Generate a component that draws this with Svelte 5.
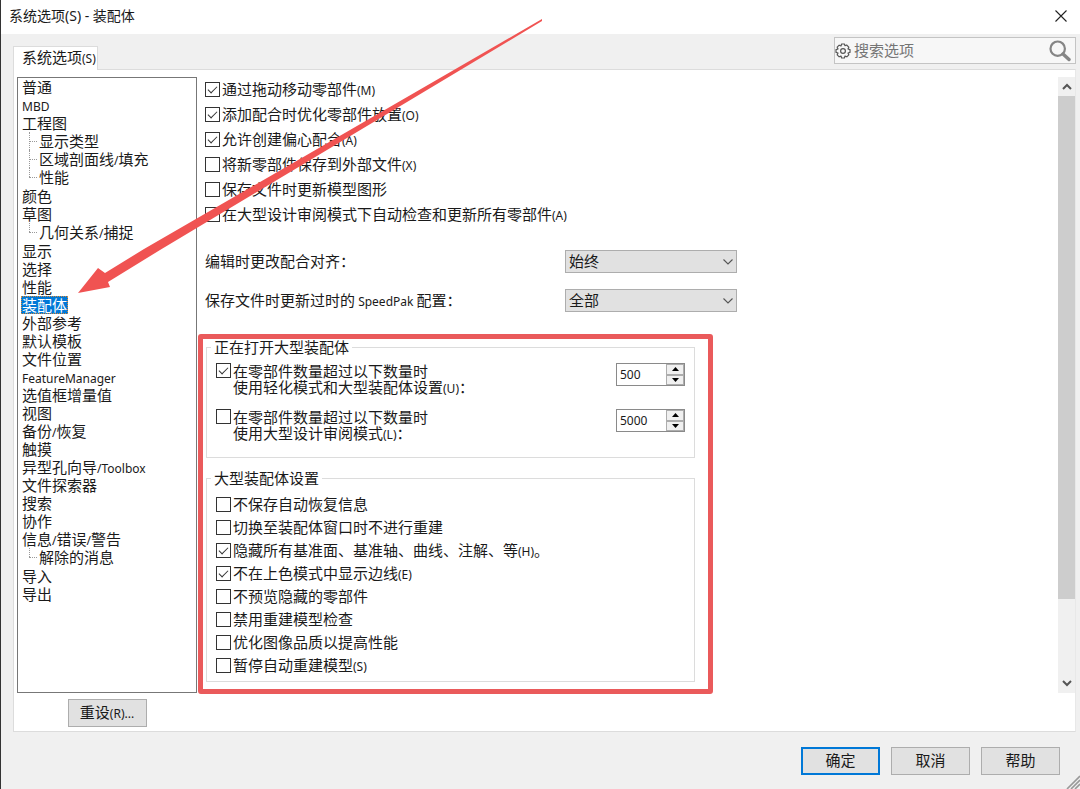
<script lang="ts">
  interface TreeItem {
    id: string;
    label: string;
    children?: TreeItem[];
  }

  interface Option {
    id: string;
    label: string;
    checked: boolean;
  }

  const tree: TreeItem[] = [
    { id: 'general', label: '普通' },
    { id: 'mbd', label: 'MBD' },
    {
      id: 'drawings',
      label: '工程图',
      children: [
        { id: 'display-style', label: '显示类型' },
        { id: 'hatch', label: '区域剖面线/填充' },
        { id: 'drawing-performance', label: '性能' },
      ],
    },
    { id: 'colors', label: '颜色' },
    { id: 'sketch', label: '草图', children: [{ id: 'snaps', label: '几何关系/捕捉' }] },
    { id: 'display', label: '显示' },
    { id: 'selection', label: '选择' },
    { id: 'performance', label: '性能' },
    { id: 'assemblies', label: '装配体' },
    { id: 'external-refs', label: '外部参考' },
    { id: 'templates', label: '默认模板' },
    { id: 'file-locations', label: '文件位置' },
    { id: 'feature-manager', label: 'FeatureManager' },
    { id: 'spin-box', label: '选值框增量值' },
    { id: 'view', label: '视图' },
    { id: 'backup', label: '备份/恢复' },
    { id: 'touch', label: '触摸' },
    { id: 'toolbox', label: '异型孔向导/Toolbox' },
    { id: 'file-explorer', label: '文件探索器' },
    { id: 'search', label: '搜索' },
    { id: 'collaboration', label: '协作' },
    {
      id: 'messages',
      label: '信息/错误/警告',
      children: [{ id: 'dismissed', label: '解除的消息' }],
    },
    { id: 'import', label: '导入' },
    { id: 'export', label: '导出' },
  ];

  let selected = $state('assemblies');

  let general: Option[] = $state([
    { id: 'drag', label: '通过拖动移动零部件(M)', checked: true },
    { id: 'placement', label: '添加配合时优化零部件放置(O)', checked: true },
    { id: 'misaligned', label: '允许创建偏心配合(A)', checked: true },
    { id: 'save-external', label: '将新零部件保存到外部文件(X)', checked: false },
    { id: 'update-graphics', label: '保存文件时更新模型图形', checked: false },
    { id: 'auto-check', label: '在大型设计审阅模式下自动检查和更新所有零部件(A)', checked: false },
  ]);

  let thresholds = $state([
    { id: 'lightweight', lines: ['在零部件数量超过以下数量时', '使用轻化模式和大型装配体设置(U)：'], checked: true, value: 500 },
    { id: 'review', lines: ['在零部件数量超过以下数量时', '使用大型设计审阅模式(L)：'], checked: false, value: 5000 },
  ]);

  let large: Option[] = $state([
    { id: 'no-recover', label: '不保存自动恢复信息', checked: false },
    { id: 'no-rebuild', label: '切换至装配体窗口时不进行重建', checked: false },
    { id: 'hide-planes', label: '隐藏所有基准面、基准轴、曲线、注解、等(H)。', checked: true },
    { id: 'no-edges', label: '不在上色模式中显示边线(E)', checked: true },
    { id: 'no-preview', label: '不预览隐藏的零部件', checked: false },
    { id: 'no-verify', label: '禁用重建模型检查', checked: false },
    { id: 'image-quality', label: '优化图像品质以提高性能', checked: false },
    { id: 'suspend', label: '暂停自动重建模型(S)', checked: false },
  ]);

  // Latin runs are set smaller than the Chinese around them
  function runs(text: string) {
    return text.match(/[ -~]+|[^ -~]+/g) ?? [];
  }
</script>

{#snippet mixed(text: string)}
  {#each runs(text) as run}{#if /^[ -~]/.test(run)}<span class="latin">{run}</span>{:else}{run}{/if}{/each}
{/snippet}

{#snippet treeNode(item: TreeItem)}
  <li>
    <button
      type="button"
      class="tree-item"
      class:selected={selected === item.id}
      onclick={() => (selected = item.id)}
    >{@render mixed(item.label)}</button>
    {#if item.children}
      <ul class="branch">
        {#each item.children as child (child.id)}
          {@render treeNode(child)}
        {/each}
      </ul>
    {/if}
  </li>
{/snippet}

{#snippet checkRow(option: Option)}
  <label class="check">
    <input type="checkbox" bind:checked={option.checked} />
    <span class="text">{@render mixed(option.label)}</span>
  </label>
{/snippet}

{#snippet chevron()}
  <svg class="chevron" width="10" height="6" viewBox="0 0 10 6" aria-hidden="true">
    <path d="M0.5 0.5 L5 5 L9.5 0.5" fill="none" stroke="#555" stroke-width="1.1" />
  </svg>
{/snippet}

<div class="dialog">
  <header class="titlebar">
    <h1>系统选项(S) - 装配体</h1>
    <button type="button" class="close" aria-label="关闭">
      <svg width="12" height="12" viewBox="0 0 12 12">
        <path d="M0.5 0.5 L11.5 11.5 M11.5 0.5 L0.5 11.5" stroke="#222" stroke-width="1.1" />
      </svg>
    </button>
  </header>

  <div class="tabs">
    <button type="button" class="tab">{@render mixed('系统选项(S)')}</button>
    <div class="search">
      <svg width="16" height="16" viewBox="0 0 16 16" aria-hidden="true">
        <path
          d="M6.6 1 H9.4 L9.9 2.7 L11.6 2 L13.8 4.2 L13 6 L15 6.6 V9.4 L13 10 L13.8 11.8 L11.8 13.8 L10 13 L9.4 15 H6.6 L6 13 L4.2 13.8 L2.2 11.8 L3 10 L1 9.4 V6.6 L3 6 L2.2 4.2 L4.2 2.2 L6 3 Z"
          fill="none"
          stroke="#555"
          stroke-width="1.2"
          stroke-linejoin="round"
        />
        <circle cx="8" cy="8" r="2.4" fill="none" stroke="#555" stroke-width="1.2" />
      </svg>
      <input type="text" placeholder="搜索选项" aria-label="搜索选项" />
      <button type="button" aria-label="搜索">
        <svg width="22" height="22" viewBox="0 0 22 22">
          <circle cx="8.7" cy="8.7" r="7.2" fill="none" stroke="#858585" stroke-width="2.2" />
          <path d="M14 14 L20 19.5" stroke="#858585" stroke-width="3.4" stroke-linecap="round" />
        </svg>
      </button>
    </div>
  </div>

  <main class="panel">
    <nav class="sidebar">
      <ul class="tree">
        {#each tree as item (item.id)}
          {@render treeNode(item)}
        {/each}
      </ul>
      <button type="button" class="btn">{@render mixed('重设(R)...')}</button>
    </nav>

    <section class="content">
      <div class="general">
        {#each general as option (option.id)}
          {@render checkRow(option)}
        {/each}
      </div>

      <div class="selects">
        <label class="text" for="mate">编辑时更改配合对齐：</label>
        <div class="select">
          <select id="mate">
            <option>始终</option>
            <option>提示</option>
            <option>从不</option>
          </select>
          {@render chevron()}
        </div>
        <label class="text" for="speedpak">{@render mixed('保存文件时更新过时的 SpeedPak 配置：')}</label>
        <div class="select">
          <select id="speedpak">
            <option>全部</option>
            <option>无</option>
          </select>
          {@render chevron()}
        </div>
      </div>

      <div class="groups">
        <fieldset class="opening">
          <legend>正在打开大型装配体</legend>
          {#each thresholds as item (item.id)}
            <div class="threshold">
              <label class="check">
                <input type="checkbox" bind:checked={item.checked} />
                <span>
                  {#each item.lines as line}
                    <span class="line">{@render mixed(line)}</span>
                  {/each}
                </span>
              </label>
              <div class="spinner">
                <input type="number" aria-label={item.lines.join('')} bind:value={item.value} />
                <div class="spin-buttons">
                  <button type="button" aria-label="增加" onclick={() => item.value++}>
                    <svg width="7" height="4" viewBox="0 0 7 4"><path d="M0 4 L3.5 0 L7 4 Z" /></svg>
                  </button>
                  <button type="button" aria-label="减少" onclick={() => item.value--}>
                    <svg width="7" height="4" viewBox="0 0 7 4"><path d="M0 0 L3.5 4 L7 0 Z" /></svg>
                  </button>
                </div>
              </div>
            </div>
          {/each}
        </fieldset>

        <fieldset class="large">
          <legend>大型装配体设置</legend>
          {#each large as option (option.id)}
            {@render checkRow(option)}
          {/each}
        </fieldset>
        <div class="highlight"></div>
      </div>
    </section>

    <div class="scrollbar">
      <button type="button" aria-label="向上滚动">
        <svg width="10" height="7" viewBox="0 0 10 7"><path d="M1 6 L5 2 L9 6" fill="none" stroke="#555" stroke-width="2" /></svg>
      </button>
      <div class="track"><div class="thumb"></div></div>
      <button type="button" aria-label="向下滚动">
        <svg width="10" height="7" viewBox="0 0 10 7"><path d="M1 1 L5 5 L9 1" fill="none" stroke="#555" stroke-width="2" /></svg>
      </button>
    </div>
  </main>

  <footer class="actions">
    <button type="button" class="btn primary">确定</button>
    <button type="button" class="btn">取消</button>
    <button type="button" class="btn">帮助</button>
  </footer>

  <svg class="grip" width="14" height="14" viewBox="0 0 14 14" aria-hidden="true">
    <path d="M1 14 L14 1 M5 14 L14 5 M9 14 L14 9" stroke="#999" stroke-width="1.6" />
  </svg>

  <svg class="arrow" width="560" height="300" viewBox="0 0 560 300" aria-hidden="true">
    <path d="M77 293 L97 268 L104 273 L143 249 L541 19 L541 21 L159 250 L107 282 L109 287 Z" fill="#f05352" />
  </svg>
</div>

<style>
  :global(body) {
    background: #f0f0f0;
  }

  .dialog {
    position: relative;
    display: flex;
    flex-direction: column;
    box-sizing: border-box;
    min-height: 100vh;
    border-left: 1px solid #333;
    background: #f0f0f0;
    color: #1a1a1a;
    font-family: 'Noto Sans CJK SC', sans-serif;
    font-size: 15px;
    line-height: 18px;
  }

  button,
  input,
  select {
    box-sizing: border-box;
    margin: 0;
    padding: 0;
    border: none;
    border-radius: 0;
    background: none;
    color: inherit;
    font: inherit;
  }

  svg {
    display: block;
  }

  .latin {
    font-family: 'Noto Sans', sans-serif;
    font-size: 12px;
    line-height: 1;
    white-space: pre;
  }

  .text {
    padding-bottom: 2px;
  }

  /* Title bar */
  .titlebar {
    display: flex;
    align-items: center;
    justify-content: space-between;
    box-sizing: border-box;
    height: 34px;
    padding: 0 13px 2px 8px;
    background: #fff;
  }

  h1 {
    margin: 0;
    font-family: 'Noto Sans', 'Noto Sans CJK SC', sans-serif;
    font-size: 14px;
    font-weight: 400;
  }

  .close {
    display: grid;
    place-items: center;
  }

  /* Tab and search */
  .tabs {
    display: flex;
    align-items: flex-end;
    justify-content: space-between;
    height: 35px;
    padding: 0 4px 0 12px;
  }

  .tab {
    position: relative;
    height: 24px;
    margin-bottom: -1px;
    padding: 0 1px 3px 8px;
    border: 1px solid #dcdcdc;
    border-bottom: none;
    background: #fff;
  }

  .search {
    display: flex;
    align-items: center;
    align-self: flex-start;
    gap: 3px;
    box-sizing: border-box;
    width: 242px;
    height: 27px;
    margin-top: 3px;
    padding: 0 4px 0 0;
    border: 1px solid #c4c4c4;
    background: #f7f7f7;
  }

  .search input {
    flex: 1;
    min-width: 0;
    padding-bottom: 2px;
    outline: none;
  }

  .search input::placeholder {
    color: #757575;
    opacity: 1;
  }

  /* Panel */
  .panel {
    display: flex;
    margin: 0 4px 0 12px;
    padding: 7px 0 4px 3px;
    border: 1px solid #dcdcdc;
    border-right-color: #e8e8e8;
    background: #fff;
  }

  .sidebar {
    display: flex;
    flex: 0 0 180px;
    flex-direction: column;
    align-items: center;
    gap: 6px;
  }

  .tree {
    box-sizing: border-box;
    width: 100%;
    height: 616px;
    padding: 0 3px;
    border: 1px solid #777;
  }

  ul {
    margin: 0;
    padding: 0;
    list-style: none;
  }

  .tree-item {
    display: block;
    height: 18px;
    padding: 0 1px;
    line-height: 18px;
    white-space: nowrap;
  }

  .tree-item.selected {
    outline: 1px dotted #d88a3a;
    outline-offset: -1px;
    background: #0078d7;
    color: #fff;
  }

  .branch {
    margin-bottom: 1px;
    padding-left: 8px;
  }

  .branch li {
    position: relative;
    padding-left: 9px;
  }

  .branch li::before,
  .branch li::after {
    position: absolute;
    left: 0;
    content: '';
  }

  .branch li::before {
    top: 0;
    height: 100%;
    border-left: 1px dotted #999;
  }

  .branch li:last-child::before {
    height: 9px;
  }

  .branch li::after {
    top: 9px;
    width: 8px;
    border-top: 1px dotted #999;
  }

  .btn {
    width: 79px;
    height: 28px;
    padding-bottom: 2px;
    border: 1px solid #adadad;
    background: #e1e1e1;
  }

  .btn.primary {
    border: 2px solid #0078d7;
  }

  /* Options */
  .content {
    flex: 1;
    min-width: 0;
    padding-left: 8px;
  }

  .check {
    display: flex;
    align-items: center;
    gap: 2px;
    white-space: nowrap;
  }

  .check input {
    position: relative;
    flex: none;
    width: 15px;
    height: 15px;
    border: 1px solid #333;
    background: #fff;
    appearance: none;
  }

  .check input:checked::after {
    position: absolute;
    top: 3px;
    left: 2px;
    width: 8px;
    height: 4px;
    border: solid #333;
    border-width: 0 0 1px 1px;
    content: '';
    transform: rotate(-45deg);
  }

  .general .check {
    height: 25px;
  }

  .selects {
    display: grid;
    grid-template-columns: 360px 172px;
    row-gap: 16px;
    align-items: center;
    margin: 23px 0 25px;
  }

  .select {
    position: relative;
  }

  select {
    display: block;
    width: 100%;
    height: 23px;
    padding: 0 24px 2px 3px;
    border: 1px solid #adadad;
    background: #e1e1e1;
    appearance: none;
  }

  .chevron {
    position: absolute;
    top: 9px;
    right: 4px;
    pointer-events: none;
  }

  .groups {
    position: relative;
    width: 489px;
    margin-left: 1px;
  }

  fieldset {
    min-width: 0;
    margin: 0;
    padding: 5px 9px 4px;
    border: 1px solid #dcdcdc;
  }

  legend {
    margin-left: -5px;
    padding: 0 3px;
    line-height: 20px;
  }

  .opening {
    display: grid;
    row-gap: 14px;
    margin-bottom: 10px;
    padding-top: 6px;
    padding-bottom: 16px;
  }

  .threshold {
    display: flex;
    align-items: flex-start;
    justify-content: space-between;
  }

  .threshold .check {
    align-items: flex-start;
    line-height: 16px;
  }

  .line {
    display: block;
    height: 16px;
  }

  .large .check {
    height: 23px;
  }

  .spinner {
    display: flex;
    box-sizing: border-box;
    width: 69px;
    height: 23px;
    border: 1px solid #8a8a8a;
    background: #fff;
  }

  .spinner input {
    flex: 1;
    min-width: 0;
    padding-left: 3px;
    outline: none;
    font-family: 'Noto Sans', sans-serif;
    font-size: 12px;
    appearance: textfield;
  }

  .spinner input::-webkit-inner-spin-button {
    display: none;
  }

  .spin-buttons {
    display: grid;
    grid-template-rows: 1fr 1fr;
    width: 18px;
  }

  .spin-buttons button {
    display: grid;
    place-items: center;
    border: 1px solid #adadad;
    background: #f0f0f0;
  }

  .highlight {
    position: absolute;
    inset: -3px -18px -12px -8px;
    border: 5px solid #ea5a5b;
    border-radius: 3px;
    pointer-events: none;
  }

  /* Scrollbar */
  .scrollbar {
    display: flex;
    flex-direction: column;
    width: 17px;
    height: 616px;
    background: #f0f0f0;
  }

  .scrollbar button {
    display: grid;
    place-items: center;
    height: 19px;
  }

  .track {
    flex: 1;
  }

  .thumb {
    height: 87%;
    background: #cdcdcd;
  }

  .actions {
    display: flex;
    gap: 11px;
    justify-content: flex-end;
    padding: 15px 20px 14px;
  }

  .grip {
    position: absolute;
    right: 0;
    bottom: 0;
  }

  .arrow {
    position: absolute;
    top: 0;
    left: 0;
    pointer-events: none;
  }
</style>
